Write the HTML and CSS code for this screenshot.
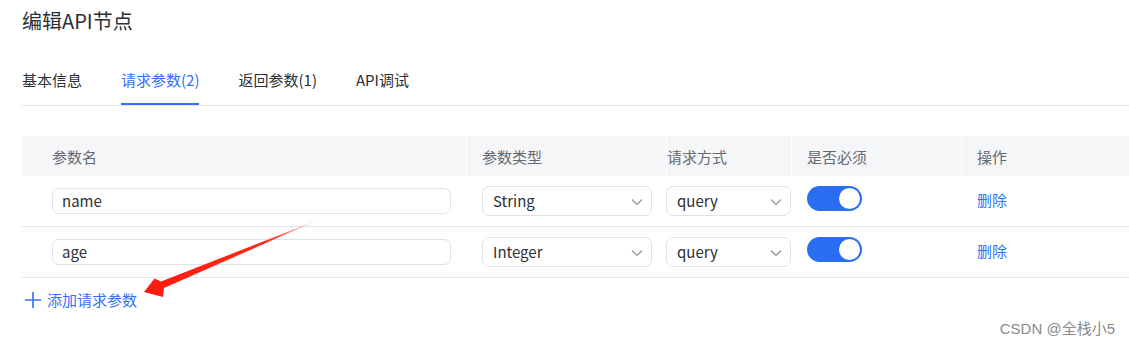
FILE: index.html
```html
<!DOCTYPE html>
<html lang="zh-CN">

<head>
    <meta charset="UTF-8">
    <meta name="viewport" content="width=device-width, initial-scale=1.0">
    <title>编辑API节点</title>
    <link rel="stylesheet" href="styles.css">
</head>

<body>
    <div class="page">
        <h1 class="title">编辑API节点</h1>

        <div class="tabs">
            <div class="tab">基本信息</div>
            <div class="tab active">请求参数(2)</div>
            <div class="tab">返回参数(1)</div>
            <div class="tab">API调试</div>
        </div>

        <div class="param-table">
            <div class="row head">
                <div class="cell c-name">参数名</div>
                <div class="cell c-type">参数类型</div>
                <div class="cell c-method">请求方式</div>
                <div class="cell c-req">是否必须</div>
                <div class="cell c-op">操作</div>
            </div>

            <div class="row">
                <div class="cell c-name"><div class="input">name</div></div>
                <div class="cell c-type">
                    <div class="select type-select">String
                        <svg class="chevron" width="12" height="8" viewBox="0 0 12 8"><path d="M1 1.5l5 5 5-5" fill="none" stroke="#8f959e" stroke-width="1.2"/></svg>
                    </div>
                </div>
                <div class="cell c-method">
                    <div class="select method-select">query
                        <svg class="chevron" width="12" height="8" viewBox="0 0 12 8"><path d="M1 1.5l5 5 5-5" fill="none" stroke="#8f959e" stroke-width="1.2"/></svg>
                    </div>
                </div>
                <div class="cell c-req"><div class="switch on"><span class="knob"></span></div></div>
                <div class="cell c-op"><a class="link">删除</a></div>
            </div>

            <div class="row">
                <div class="cell c-name"><div class="input">age</div></div>
                <div class="cell c-type">
                    <div class="select type-select">Integer
                        <svg class="chevron" width="12" height="8" viewBox="0 0 12 8"><path d="M1 1.5l5 5 5-5" fill="none" stroke="#8f959e" stroke-width="1.2"/></svg>
                    </div>
                </div>
                <div class="cell c-method">
                    <div class="select method-select">query
                        <svg class="chevron" width="12" height="8" viewBox="0 0 12 8"><path d="M1 1.5l5 5 5-5" fill="none" stroke="#8f959e" stroke-width="1.2"/></svg>
                    </div>
                </div>
                <div class="cell c-req"><div class="switch on"><span class="knob"></span></div></div>
                <div class="cell c-op"><a class="link">删除</a></div>
            </div>
        </div>

        <div class="add-btn">
            <svg width="18" height="18" viewBox="0 0 18 18"><path d="M9 1v16M1 9h16" stroke="#3370ff" stroke-width="1.6"/></svg>
            <span>添加请求参数</span>
        </div>
    </div>

    <!-- annotation arrow drawn over the screenshot -->
    <svg class="annotation" width="1129" height="346" viewBox="0 0 1129 346">
        <defs>
            <linearGradient id="fade" x1="318" y1="220" x2="144" y2="292" gradientUnits="userSpaceOnUse">
                <stop offset="0" stop-color="#ff2a1a" stop-opacity="0.15"/>
                <stop offset="0.3" stop-color="#ff2a1a"/>
                <stop offset="1" stop-color="#ff1a10"/>
            </linearGradient>
        </defs>
        <polygon points="318,220 164,288 163,297 144,292 154.5,278.5 161,281.5" fill="url(#fade)"/>
    </svg>

    <div class="watermark">CSDN @全栈小5</div>
</body>

</html>
```

FILE: styles.css
```css
* {
    margin: 0;
    padding: 0;
    box-sizing: border-box;
}

body {
    font-family: "Noto Sans CJK SC", sans-serif;
    background: #fff;
    color: #2b2f36;
    width: 1129px;
    height: 346px;
    overflow: hidden;
    position: relative;
}

.page {
    padding: 7px 0 0 22px;
}

.title {
    font-size: 20px;
    font-weight: 400;
    line-height: 28px;
    color: #2b2f36;
}

.tabs {
    display: flex;
    gap: 39px;
    margin-top: 34px;
    border-bottom: 1px solid #e5e6eb;
}

.tab {
    position: relative;
    font-size: 15px;
    line-height: 22px;
    padding-bottom: 14px;
    color: #2b2f36;
}

.tab.active {
    color: #3370ff;
}

.tab.active::after {
    content: "";
    position: absolute;
    left: 0;
    right: 0;
    bottom: 0;
    height: 2px;
    background: #3370ff;
}

.param-table {
    margin-top: 30px;
}

.row {
    display: grid;
    grid-template-columns: 444px 200px 125px 170px 1fr;
    height: 51px;
    border-bottom: 1px solid #e5e6eb;
    align-items: center;
}

.row.head {
    height: 40px;
    background: #f5f6f7;
    border-bottom: none;
    color: #646a73;
    font-size: 15px;
    align-items: stretch;
}

.row.head .cell {
    display: flex;
    align-items: center;
}

.row.head .cell + .cell {
    border-left: 1px solid #fff;
}

.c-name {
    padding: 0 15px 0 30px;
}

.c-type {
    padding: 0 14px 0 16px;
}

.c-method {
    padding: 0;
}

.c-req,
.c-op {
    padding-left: 16px;
}

.row:not(.head) .c-req,
.row:not(.head) .c-op {
    padding-bottom: 5px;
}

.row.head .c-type,
.row.head .c-req,
.row.head .c-op {
    padding-left: 15px;
}

.input {
    height: 26px;
    border: 1px solid #e0e2e6;
    border-radius: 7px;
    padding-left: 9px;
    font-size: 15px;
    line-height: 24px;
    color: #2b2f36;
}

.select {
    position: relative;
    height: 30px;
    border: 1px solid #e0e2e6;
    border-radius: 7px;
    padding-left: 10px;
    font-size: 15px;
    line-height: 28px;
    color: #2b2f36;
}

.method-select {
    width: 125px;
}

.chevron {
    position: absolute;
    right: 8px;
    top: 11px;
}

.switch {
    width: 55px;
    height: 25px;
    border-radius: 13px;
    background: #2a6df2;
    padding: 2px;
    display: flex;
    justify-content: flex-end;
}

.knob {
    width: 21px;
    height: 21px;
    border-radius: 50%;
    background: #fff;
}

.link {
    color: #3370ff;
    font-size: 15px;
    cursor: pointer;
}

.add-btn {
    display: flex;
    align-items: center;
    gap: 5px;
    margin-top: 11px;
    padding-left: 2px;
    color: #3370ff;
    font-size: 15px;
    line-height: 22px;
}

.annotation {
    position: absolute;
    left: 0;
    top: 0;
    pointer-events: none;
}

.watermark {
    position: absolute;
    right: 14px;
    bottom: 8px;
    font-family: "Liberation Sans", "Noto Sans CJK SC", sans-serif;
    font-size: 15px;
    color: #8a8a8a;
    text-shadow: 0 0 2px #fff;
}
```
